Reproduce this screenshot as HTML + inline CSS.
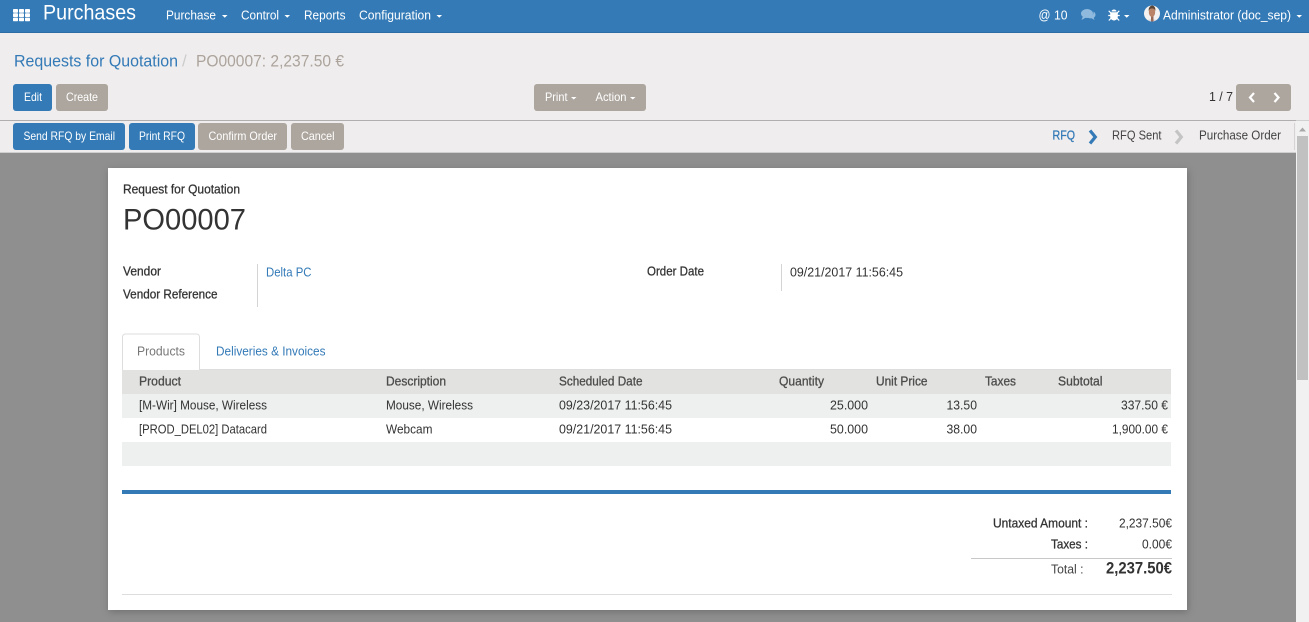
<!DOCTYPE html>
<html lang="en">
<head>
<meta charset="utf-8">
<title>Purchases</title>
<style>
html,body{margin:0;padding:0;width:1309px;height:622px;overflow:hidden;background:#efeded}
svg{display:block}
text{font-family:"Liberation Sans",sans-serif;font-size:13px;fill:#444;white-space:pre;transform:translateY(-.5px)}
.w{fill:#fff}
.b{fill:#337ab7}
.bt{fill:#fff;font-size:12px}
.h{fill:#4c4c4c;stroke:#4c4c4c;stroke-width:.3px}
.d{fill:#333}
.l{fill:#333;stroke:#333;stroke-width:.28px}
</style>
</head>
<body>
<svg width="1309" height="622" viewBox="0 0 1309 622" xmlns="http://www.w3.org/2000/svg">
<defs>
<filter id="s" x="-3%" y="-5%" width="106%" height="110%"><feDropShadow dx="1" dy="2" stdDeviation="4" flood-color="#000" flood-opacity=".22"/></filter>
<clipPath id="av"><circle cx="1152" cy="13.500" r="8"/></clipPath>
</defs>

<!-- navbar -->
<rect x="0" y="0" width="1309" height="32" fill="#337ab7"/>
<rect x="0" y="32" width="1309" height="1" fill="#2e6da4"/>
<g fill="#fff">
<rect x="13" y="9" width="5" height="3.700" rx=".8"/><rect x="19" y="9" width="5" height="3.700" rx=".8"/><rect x="25" y="9" width="5" height="3.700" rx=".8"/>
<rect x="13" y="13.300" width="5" height="3.700" rx=".8"/><rect x="19" y="13.300" width="5" height="3.700" rx=".8"/><rect x="25" y="13.300" width="5" height="3.700" rx=".8"/>
<rect x="13" y="17.600" width="5" height="3.700" rx=".8"/><rect x="19" y="17.600" width="5" height="3.700" rx=".8"/><rect x="25" y="17.600" width="5" height="3.700" rx=".8"/>
</g>
<text x="43" y="20" class="w" style="font-size:21px" textLength="93" lengthAdjust="spacingAndGlyphs">Purchases</text>
<text x="166" y="20" class="w" textLength="50" lengthAdjust="spacingAndGlyphs">Purchase</text>
<path d="M222 15h5.500l-2.750 2.800z" fill="#fff"/>
<text x="241" y="20" class="w" textLength="38" lengthAdjust="spacingAndGlyphs">Control</text>
<path d="M284.500 15h5.500l-2.750 2.800z" fill="#fff"/>
<text x="304" y="20" class="w" textLength="41.500" lengthAdjust="spacingAndGlyphs">Reports</text>
<text x="359" y="20" class="w" textLength="72" lengthAdjust="spacingAndGlyphs">Configuration</text>
<path d="M436.500 15h5.500l-2.750 2.800z" fill="#fff"/>

<text x="1038.500" y="20" class="w" style="font-size:14px" textLength="12" lengthAdjust="spacingAndGlyphs">@</text>
<text x="1054" y="20" class="w" textLength="13.500" lengthAdjust="spacingAndGlyphs">10</text>
<!-- chat -->
<g fill="#8fbade">
<ellipse cx="1087" cy="13.500" rx="6" ry="4.500"/>
<path d="M1083 16l-1.500 4 4.500-2.500z"/>
<path d="M1093.500 11.500c1.500 1 2 2.200 2 3.300 0 1.400-.8 2.400-1.800 3l.8 2.200-3-1.700c-1.500.2-3.500-.2-4.500-1 3.500.2 7-1.800 6.500-5.800z"/>
</g>
<!-- bug -->
<g fill="#fff">
<path d="M1111.500 11.500a2.500 2 0 0 1 5 0z"/>
<path d="M1110.200 12.300h7.600v4.500c0 2-1.700 3.700-3.800 3.700s-3.800-1.700-3.800-3.700z"/>
<path d="M1108.700 10.800l2.400 2.400M1119.300 10.800l-2.400 2.400M1108.200 15.500h2.800M1119.800 15.500H1117M1108.800 20.500l2.300-2.300M1119.200 20.500l-2.300-2.300" stroke="#fff" stroke-width="1.200" fill="none"/>
</g>
<path d="M1124 15h5.500l-2.750 2.800z" fill="#fff"/>
<!-- avatar -->
<circle cx="1152" cy="13.500" r="8" fill="#f4f2f0"/>
<g clip-path="url(#av)">
<path d="M1146 23c.5-3 3-3.800 6-3.800s5.500.8 6 3.800z" fill="#d8d8dc"/>
<rect x="1151" y="16" width="2.500" height="6" fill="#9a6a58"/>
<ellipse cx="1152" cy="12" rx="3.200" ry="5" fill="#b98468"/>
<path d="M1148.700 11c-.3-3.500 1.500-5.500 3.500-5.500s3.500 2 3.200 5.500c-.7-2-1.500-2.500-3.300-2.500s-2.700.5-3.400 2.500z" fill="#5a4638"/>
</g>
<text x="1163" y="20" class="w" textLength="128" lengthAdjust="spacingAndGlyphs">Administrator (doc_sep)</text>
<path d="M1296.500 15h5.500l-2.750 2.800z" fill="#fff"/>

<!-- control panel -->
<rect x="0" y="33" width="1309" height="87" fill="#efeded"/>
<text x="14" y="67" class="b" style="font-size:17px" textLength="164" lengthAdjust="spacingAndGlyphs">Requests for Quotation</text>
<text x="182" y="67" style="font-size:17px;fill:#ccc">/</text>
<text x="196" y="67" style="font-size:17px;fill:#aca49c" textLength="148" lengthAdjust="spacingAndGlyphs">PO00007: 2,237.50 €</text>

<rect x="13" y="84" width="39" height="27" rx="3" fill="#337ab7"/>
<text x="24" y="101.500" class="bt" textLength="18" lengthAdjust="spacingAndGlyphs">Edit</text>
<rect x="56" y="84" width="52" height="27" rx="3" fill="#ada69e"/>
<text x="66" y="101.500" class="bt" textLength="32" lengthAdjust="spacingAndGlyphs">Create</text>

<rect x="534" y="84" width="112" height="27" rx="3" fill="#ada69e"/>
<text x="545" y="101.500" class="bt" textLength="22.500" lengthAdjust="spacingAndGlyphs">Print</text>
<path d="M571 97h5.500l-2.750 2.500z" fill="#fff"/>
<text x="595.500" y="101.500" class="bt" textLength="31" lengthAdjust="spacingAndGlyphs">Action</text>
<path d="M630 97h5.500l-2.750 2.500z" fill="#fff"/>

<text x="1209" y="101.500" style="fill:#333" textLength="24" lengthAdjust="spacingAndGlyphs">1 / 7</text>
<rect x="1236" y="84" width="55" height="27" rx="3" fill="#ada69e"/>
<path d="M1254 93l-4 4.500 4 4.500" fill="none" stroke="#fff" stroke-width="2.200"/>
<path d="M1274.500 93l4 4.500-4 4.500" fill="none" stroke="#fff" stroke-width="2.200"/>

<!-- status bar -->
<rect x="0" y="120" width="1296" height="1" fill="#b0aeae"/>
<rect x="1296" y="120" width="13" height="1" fill="#d0d0d0"/>
<rect x="0" y="121" width="1296" height="32" fill="#efeded"/>
<rect x="0" y="152" width="1296" height="1" fill="#cfcfcf"/>
<rect x="13" y="123" width="112" height="27" rx="3" fill="#337ab7"/>
<text x="23.500" y="140.500" class="bt" textLength="91.500" lengthAdjust="spacingAndGlyphs">Send RFQ by Email</text>
<rect x="129" y="123" width="66" height="27" rx="3" fill="#337ab7"/>
<text x="139" y="140.500" class="bt" textLength="46" lengthAdjust="spacingAndGlyphs">Print RFQ</text>
<rect x="198" y="123" width="89" height="27" rx="3" fill="#ada69e"/>
<text x="208.500" y="140.500" class="bt" textLength="68.500" lengthAdjust="spacingAndGlyphs">Confirm Order</text>
<rect x="291" y="123" width="53" height="27" rx="3" fill="#ada69e"/>
<text x="301" y="140.500" class="bt" textLength="33.500" lengthAdjust="spacingAndGlyphs">Cancel</text>

<text x="1052.500" y="140" style="fill:#337ab7;stroke:#337ab7;stroke-width:.3px" textLength="22.500" lengthAdjust="spacingAndGlyphs">RFQ</text>
<path d="M1090 130.500l5.300 6.500-5.300 6.500" fill="none" stroke="#337ab7" stroke-width="3.200"/>
<text x="1112" y="140" style="fill:#444" textLength="49.500" lengthAdjust="spacingAndGlyphs">RFQ Sent</text>
<path d="M1176 130.500l5.300 6.500-5.300 6.500" fill="none" stroke="#c4c4c4" stroke-width="3.200"/>
<text x="1199" y="140" style="fill:#444" textLength="82" lengthAdjust="spacingAndGlyphs">Purchase Order</text>
<rect x="1294" y="123" width="1" height="27" fill="#d4d4d4"/>

<!-- content backdrop -->
<rect x="0" y="153" width="1296" height="469" fill="#8f8f8f"/>

<!-- scrollbar -->
<rect x="1296" y="121" width="13" height="501" fill="#f1f1f1"/>
<path d="M1299 131.500l3.500-4 3.500 4z" fill="#a8a8a8"/>
<rect x="1297" y="136" width="11" height="244" fill="#c1c1c1"/>

<!-- sheet -->
<rect x="108" y="168" width="1079" height="442" fill="#fff" filter="url(#s)"/>
<text x="123" y="194" class="l" textLength="117" lengthAdjust="spacingAndGlyphs">Request for Quotation</text>
<text x="123" y="230" style="font-size:30px;fill:#333" textLength="123" lengthAdjust="spacingAndGlyphs">PO00007</text>

<text x="123" y="276" class="l" textLength="38" lengthAdjust="spacingAndGlyphs">Vendor</text>
<text x="123" y="299" class="l" textLength="94.500" lengthAdjust="spacingAndGlyphs">Vendor Reference</text>
<rect x="257" y="264" width="1" height="43" fill="#d4d4d4"/>
<text x="266" y="277" class="b" textLength="45.500" lengthAdjust="spacingAndGlyphs">Delta PC</text>
<text x="647" y="276" class="l" textLength="57" lengthAdjust="spacingAndGlyphs">Order Date</text>
<rect x="781" y="264" width="1" height="27" fill="#d4d4d4"/>
<text x="790" y="277" style="fill:#333" textLength="113" lengthAdjust="spacingAndGlyphs">09/21/2017 11:56:45</text>

<!-- tabs -->
<rect x="122" y="369" width="1049" height="1" fill="#ddd"/>
<path d="M122.500 370v-33a3 3 0 0 1 3-3h71a3 3 0 0 1 3 3v33" fill="#fff" stroke="#ddd"/>
<text x="137" y="356" style="fill:#777" textLength="48" lengthAdjust="spacingAndGlyphs">Products</text>
<text x="216" y="356" class="b" textLength="109.500" lengthAdjust="spacingAndGlyphs">Deliveries &amp; Invoices</text>

<!-- table -->
<rect x="122" y="370" width="1049" height="24" fill="#e2e2e0"/>
<rect x="122" y="394" width="1049" height="24" fill="#eeefef"/>
<rect x="122" y="442" width="1049" height="24" fill="#eeefef"/>

<text x="139" y="386" class="h" textLength="42" lengthAdjust="spacingAndGlyphs">Product</text>
<text x="386" y="386" class="h" textLength="60" lengthAdjust="spacingAndGlyphs">Description</text>
<text x="559" y="386" class="h" textLength="83.500" lengthAdjust="spacingAndGlyphs">Scheduled Date</text>
<text x="779" y="386" class="h" textLength="45" lengthAdjust="spacingAndGlyphs">Quantity</text>
<text x="876" y="386" class="h" textLength="51.500" lengthAdjust="spacingAndGlyphs">Unit Price</text>
<text x="985" y="386" class="h" textLength="31" lengthAdjust="spacingAndGlyphs">Taxes</text>
<text x="1058" y="386" class="h" textLength="44.500" lengthAdjust="spacingAndGlyphs">Subtotal</text>

<text x="139" y="410" class="d" textLength="128" lengthAdjust="spacingAndGlyphs">[M-Wir] Mouse, Wireless</text>
<text x="386" y="410" class="d" textLength="87" lengthAdjust="spacingAndGlyphs">Mouse, Wireless</text>
<text x="559" y="410" class="d" textLength="113" lengthAdjust="spacingAndGlyphs">09/23/2017 11:56:45</text>
<text x="830" y="410" class="d" textLength="38" lengthAdjust="spacingAndGlyphs">25.000</text>
<text x="946.500" y="410" class="d" textLength="30.500" lengthAdjust="spacingAndGlyphs">13.50</text>
<text x="1121" y="410" class="d" textLength="47" lengthAdjust="spacingAndGlyphs">337.50 €</text>

<text x="139" y="434" class="d" textLength="128" lengthAdjust="spacingAndGlyphs">[PROD_DEL02] Datacard</text>
<text x="386" y="434" class="d" textLength="46.500" lengthAdjust="spacingAndGlyphs">Webcam</text>
<text x="559" y="434" class="d" textLength="113" lengthAdjust="spacingAndGlyphs">09/21/2017 11:56:45</text>
<text x="830" y="434" class="d" textLength="38" lengthAdjust="spacingAndGlyphs">50.000</text>
<text x="946.500" y="434" class="d" textLength="30.500" lengthAdjust="spacingAndGlyphs">38.00</text>
<text x="1112" y="434" class="d" textLength="56" lengthAdjust="spacingAndGlyphs">1,900.00 €</text>

<rect x="122" y="490" width="1049" height="4" fill="#337ab7"/>

<!-- totals -->
<text x="993" y="528" class="l" textLength="95" lengthAdjust="spacingAndGlyphs">Untaxed Amount :</text>
<text x="1119" y="528" class="d" textLength="53" lengthAdjust="spacingAndGlyphs">2,237.50€</text>
<text x="1051" y="549" class="l" textLength="37" lengthAdjust="spacingAndGlyphs">Taxes :</text>
<text x="1142" y="549" class="d" textLength="30" lengthAdjust="spacingAndGlyphs">0.00€</text>
<rect x="971" y="558" width="201" height="1" fill="#c8c8c8"/>
<text x="1051" y="574" style="fill:#444" textLength="32.500" lengthAdjust="spacingAndGlyphs">Total :</text>
<text x="1106" y="574" style="font-size:17px;font-weight:bold;fill:#333" textLength="66" lengthAdjust="spacingAndGlyphs">2,237.50€</text>
<rect x="122" y="594" width="1050" height="1" fill="#ddd"/>
</svg>
</body>
</html>
